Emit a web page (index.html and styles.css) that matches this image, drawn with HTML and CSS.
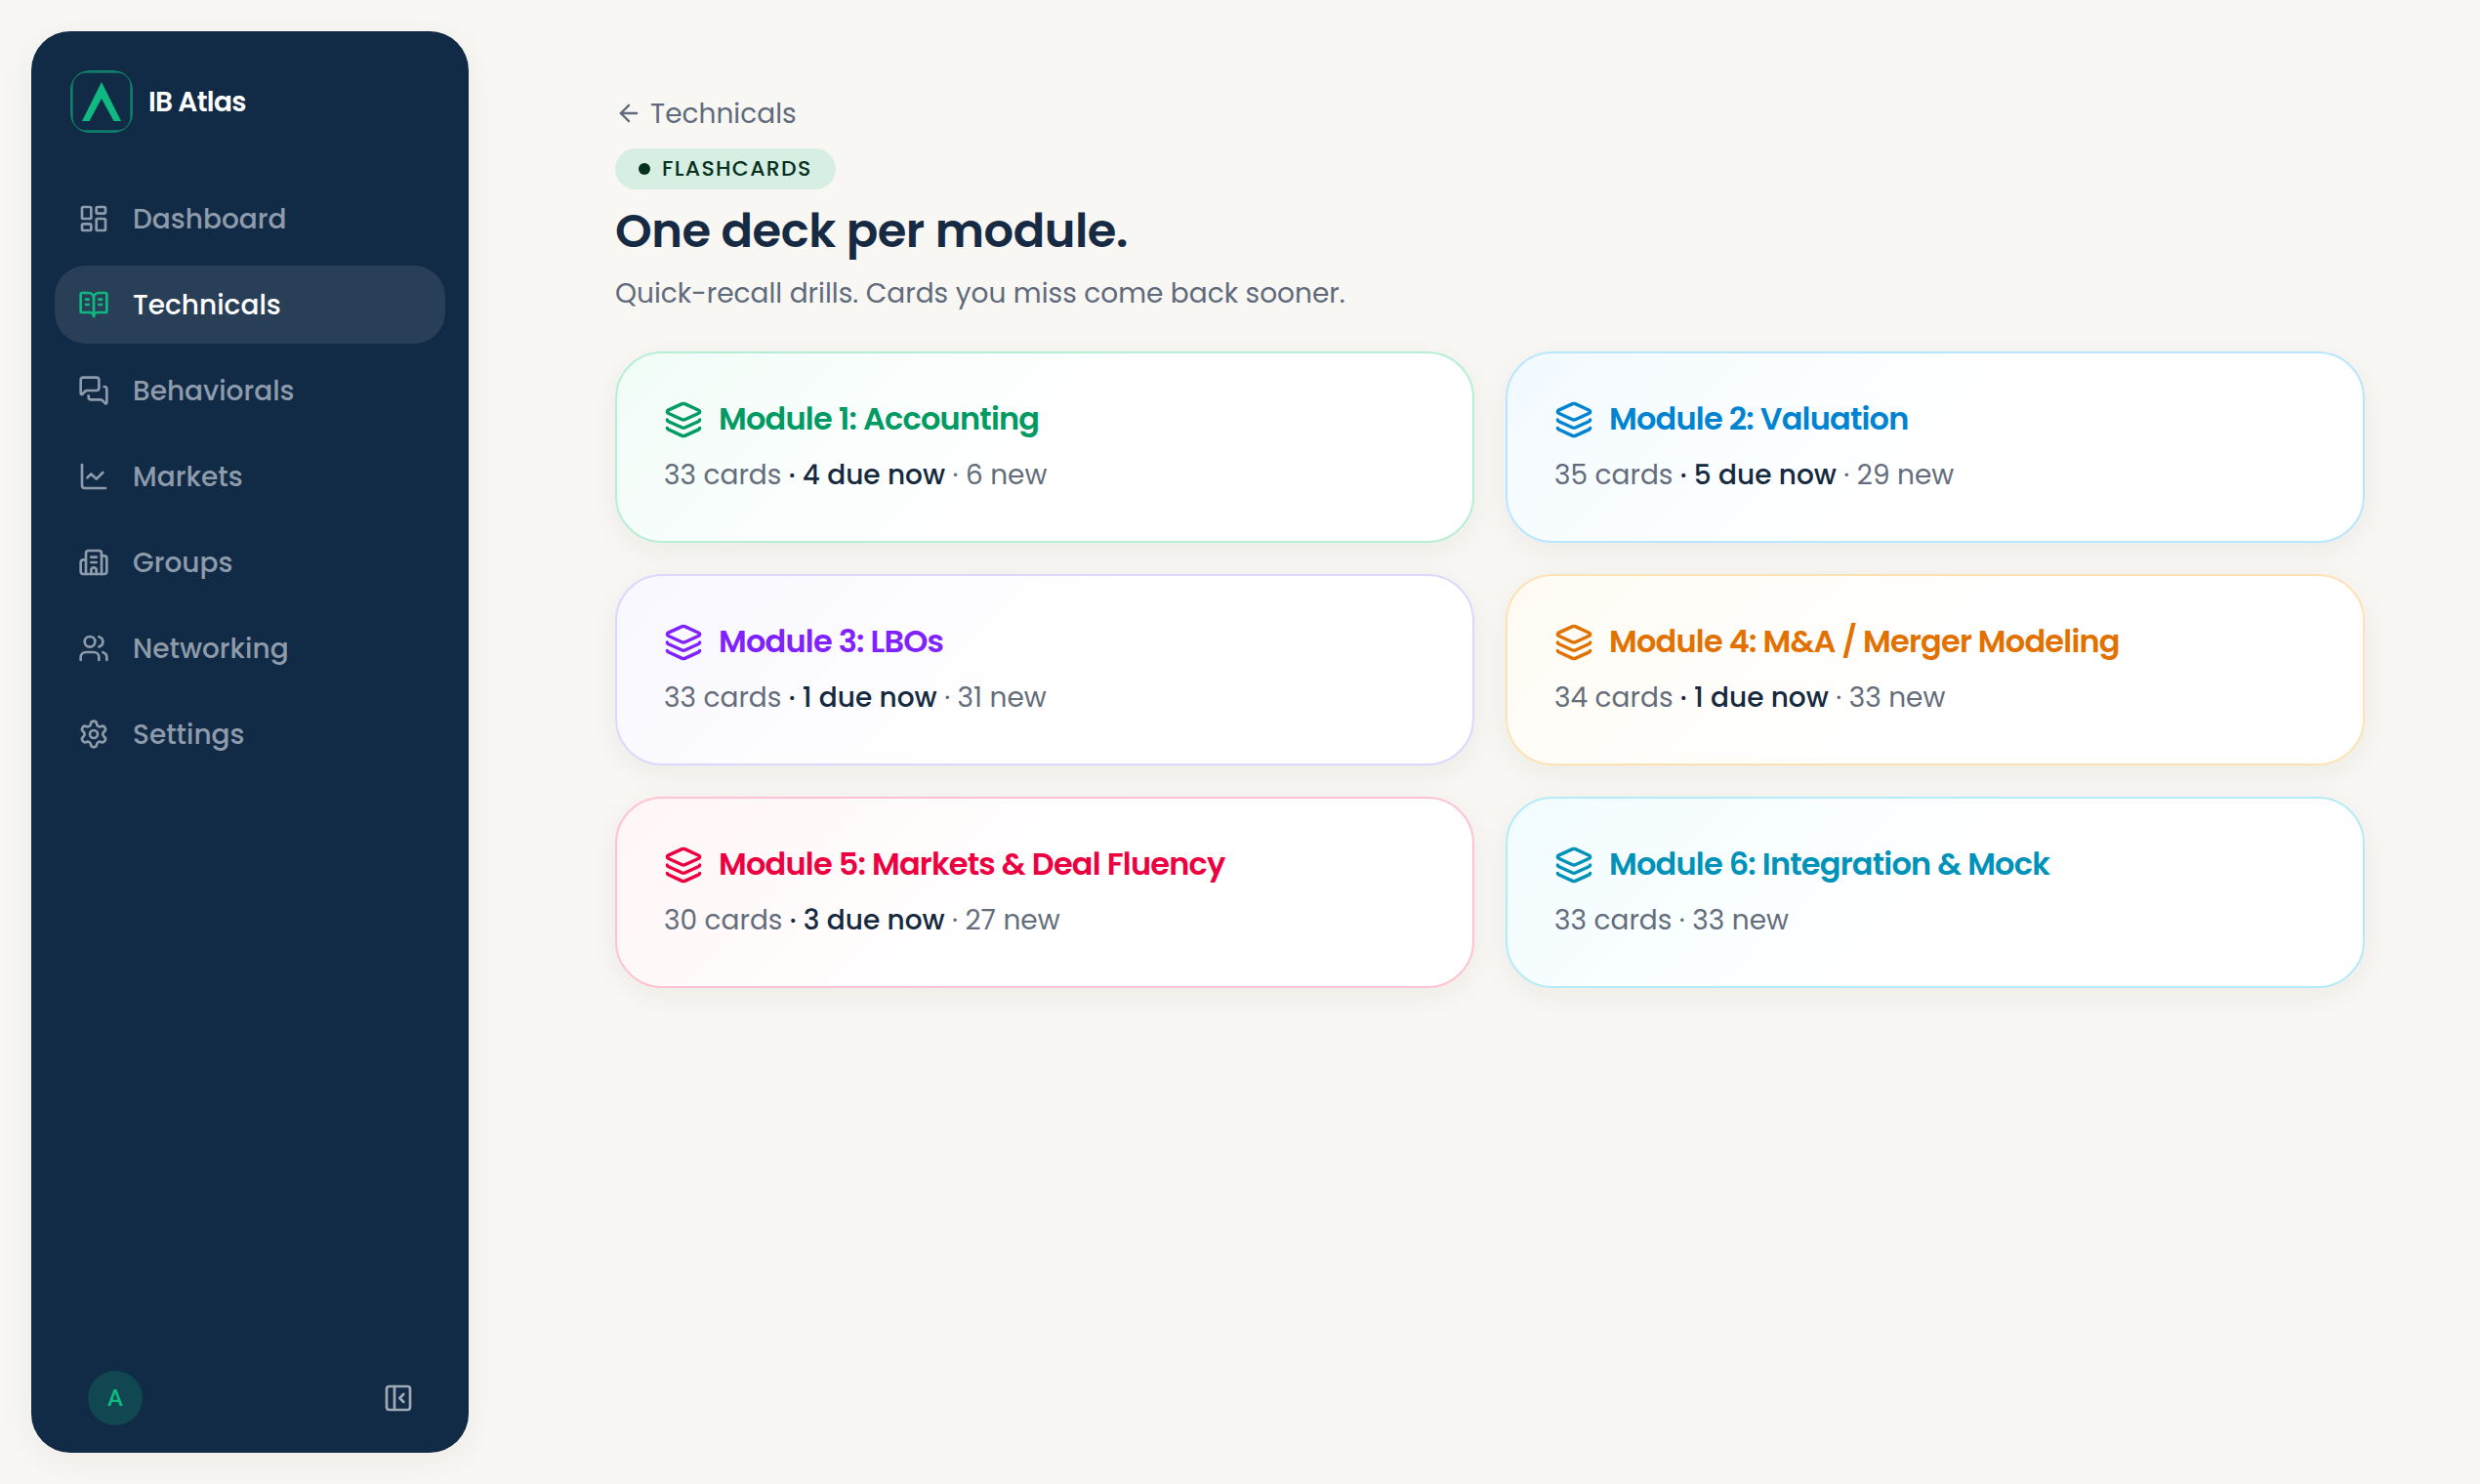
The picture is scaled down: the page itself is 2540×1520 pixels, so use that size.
FILE: index.html
```
<!DOCTYPE html>
<html lang="en">

<head>
  <meta charset="UTF-8">
  <title>IB Atlas - Flashcards</title>
  <link rel="stylesheet" href="styles.css">
</head>

<body>
  <!-- Shared icon for the deck cards -->
  <svg class="sprite" width="0" height="0">
    <symbol id="layers" viewBox="0 0 24 24">
      <path d="M12.83 2.18a2 2 0 0 0-1.66 0L2.6 6.08a1 1 0 0 0 0 1.83l8.58 3.91a2 2 0 0 0 1.66 0l8.58-3.9a1 1 0 0 0 0-1.83z"/>
      <path d="M2 12a1 1 0 0 0 .58.91l8.6 3.91a2 2 0 0 0 1.65 0l8.58-3.9A1 1 0 0 0 22 12"/>
      <path d="M2 17a1 1 0 0 0 .58.91l8.6 3.91a2 2 0 0 0 1.65 0l8.58-3.9A1 1 0 0 0 22 17"/>
    </symbol>
  </svg>

  <aside class="sidebar">
    <div class="brand">
      <svg class="logo" viewBox="0 0 64 64">
        <path class="logo-frame" fill-rule="evenodd" d="M20 0H44A20 20 0 0 1 64 20V44A20 20 0 0 1 44 64H20A20 20 0 0 1 0 44V20A20 20 0 0 1 20 0ZM15.700 2.700A13 13 0 0 0 2.700 15.700V48.300A13 13 0 0 0 15.700 61.300H48.300A13 13 0 0 0 61.300 48.300V15.700A13 13 0 0 0 48.300 2.700Z"/>
        <path class="logo-mark" d="M32 12L52 52H44.500L32 29L19.500 52H12Z"/>
      </svg>
      <span class="brand-name">IB Atlas</span>
    </div>

    <nav class="nav">
      <a class="nav-item" href="#">
        <svg class="icon" viewBox="0 0 24 24"><rect width="7" height="9" x="3" y="3" rx="1"/><rect width="7" height="5" x="14" y="3" rx="1"/><rect width="7" height="9" x="14" y="12" rx="1"/><rect width="7" height="5" x="3" y="16" rx="1"/></svg>
        <span>Dashboard</span>
      </a>
      <a class="nav-item active" href="#">
        <svg class="icon" viewBox="0 0 24 24"><path d="M12 7v14"/><path d="M16 12h2"/><path d="M16 8h2"/><path d="M3 18a1 1 0 0 1-1-1V4a1 1 0 0 1 1-1h5a4 4 0 0 1 4 4 4 4 0 0 1 4-4h5a1 1 0 0 1 1 1v13a1 1 0 0 1-1 1h-6a3 3 0 0 0-3 3 3 3 0 0 0-3-3z"/><path d="M6 12h2"/><path d="M6 8h2"/></svg>
        <span>Technicals</span>
      </a>
      <a class="nav-item" href="#">
        <svg class="icon" viewBox="0 0 24 24"><path d="M16 10a2 2 0 0 1-2 2H6.828a2 2 0 0 0-1.414.586l-2.202 2.202A.71.71 0 0 1 2 14.286V4a2 2 0 0 1 2-2h10a2 2 0 0 1 2 2z"/><path d="M20 9a2 2 0 0 1 2 2v10.286a.71.71 0 0 1-1.212.502l-2.202-2.202A2 2 0 0 0 17.172 19H10a2 2 0 0 1-2-2v-1"/></svg>
        <span>Behaviorals</span>
      </a>
      <a class="nav-item" href="#">
        <svg class="icon" viewBox="0 0 24 24"><path d="M3 3v16a2 2 0 0 0 2 2h16"/><path d="m19 9-5 5-4-4-3 3"/></svg>
        <span>Markets</span>
      </a>
      <a class="nav-item" href="#">
        <svg class="icon" viewBox="0 0 24 24"><path d="M10 12h4"/><path d="M10 8h4"/><path d="M14 21v-3a2 2 0 0 0-4 0v3"/><path d="M6 10H4a2 2 0 0 0-2 2v7a2 2 0 0 0 2 2h16a2 2 0 0 0 2-2V9a2 2 0 0 0-2-2h-2"/><path d="M6 21V5a2 2 0 0 1 2-2h8a2 2 0 0 1 2 2v16"/></svg>
        <span>Groups</span>
      </a>
      <a class="nav-item" href="#">
        <svg class="icon" viewBox="0 0 24 24"><path d="M16 21v-2a4 4 0 0 0-4-4H6a4 4 0 0 0-4 4v2"/><path d="M16 3.128a4 4 0 0 1 0 7.744"/><path d="M22 21v-2a4 4 0 0 0-3-3.870"/><circle cx="9" cy="7" r="4"/></svg>
        <span>Networking</span>
      </a>
      <a class="nav-item" href="#">
        <svg class="icon" viewBox="0 0 24 24"><path d="M9.671 4.136a2.340 2.340 0 0 1 4.659 0 2.340 2.340 0 0 0 3.319 1.915 2.340 2.340 0 0 1 2.330 4.033 2.340 2.340 0 0 0 0 3.831 2.340 2.340 0 0 1-2.330 4.033 2.340 2.340 0 0 0-3.319 1.915 2.340 2.340 0 0 1-4.659 0 2.340 2.340 0 0 0-3.320-1.915 2.340 2.340 0 0 1-2.330-4.033 2.340 2.340 0 0 0 0-3.831A2.340 2.340 0 0 1 6.350 6.051a2.340 2.340 0 0 0 3.319-1.915"/><circle cx="12" cy="12" r="3"/></svg>
        <span>Settings</span>
      </a>
    </nav>

    <div class="sidebar-footer">
      <span class="avatar">A</span>
      <svg class="icon collapse" viewBox="0 0 24 24"><rect width="18" height="18" x="3" y="3" rx="2"/><path d="M9 3v18"/><path d="m16 15-3-3 3-3"/></svg>
    </div>
  </aside>

  <main class="main">
    <div class="content">
      <a class="back" href="#">
        <svg class="back-icon" viewBox="0 0 24 24"><path d="m12 19-7-7 7-7"/><path d="M19 12H5"/></svg>
        <span>Technicals</span>
      </a>
      <div class="badge"><span class="dot"></span>FLASHCARDS</div>
      <h1>One deck per module.</h1>
      <p class="subtitle">Quick-recall drills. Cards you miss come back sooner.</p>

      <div class="decks">
        <a class="deck green" href="#">
          <div class="deck-head"><svg class="deck-icon"><use href="#layers"/></svg><h2>Module 1: Accounting</h2></div>
          <p class="meta">33 cards<strong> · 4 due now</strong> · 6 new</p>
        </a>
        <a class="deck blue" href="#">
          <div class="deck-head"><svg class="deck-icon"><use href="#layers"/></svg><h2>Module 2: Valuation</h2></div>
          <p class="meta">35 cards<strong> · 5 due now</strong> · 29 new</p>
        </a>
        <a class="deck violet" href="#">
          <div class="deck-head"><svg class="deck-icon"><use href="#layers"/></svg><h2>Module 3: LBOs</h2></div>
          <p class="meta">33 cards<strong> · 1 due now</strong> · 31 new</p>
        </a>
        <a class="deck orange" href="#">
          <div class="deck-head"><svg class="deck-icon"><use href="#layers"/></svg><h2>Module 4: M&amp;A / Merger Modeling</h2></div>
          <p class="meta">34 cards<strong> · 1 due now</strong> · 33 new</p>
        </a>
        <a class="deck rose" href="#">
          <div class="deck-head"><svg class="deck-icon"><use href="#layers"/></svg><h2>Module 5: Markets &amp; Deal Fluency</h2></div>
          <p class="meta">30 cards<strong> · 3 due now</strong> · 27 new</p>
        </a>
        <a class="deck cyan" href="#">
          <div class="deck-head"><svg class="deck-icon"><use href="#layers"/></svg><h2>Module 6: Integration &amp; Mock</h2></div>
          <p class="meta">33 cards · 33 new</p>
        </a>
      </div>
    </div>
  </main>
</body>

</html>
```
FILE: styles.css
```
* {
  box-sizing: border-box;
}

body {
  margin: 0;
  padding: 32px;
  height: 1520px;
  display: flex;
  gap: 32px;
  background: #f8f7f3;
  color: #15293f;
  font-family: Poppins, Inter, sans-serif;
  font-size: 28px;
}

a {
  color: inherit;
  text-decoration: none;
}

h1, h2, p {
  margin: 0;
}

.sprite {
  display: none;
}

/* Sidebar */
.sidebar {
  display: flex;
  flex-direction: column;
  flex: none;
  width: 448px;
  padding: 40px 24px 28px;
  border-radius: 40px;
  background: #112a45;
  box-shadow: 0 8px 40px rgba(60, 40, 20, 0.06);
}

.brand {
  display: flex;
  align-items: center;
  gap: 16px;
  padding-left: 16px;
}

.logo {
  width: 64px;
  height: 64px;
}

.logo-frame {
  fill: #107e6b;
}

.logo-mark {
  fill: #10b981;
}

.brand-name {
  padding-top: 2px;
  color: #fff;
  font-weight: 600;
  letter-spacing: -0.025em;
}

.nav {
  display: flex;
  flex-direction: column;
  gap: 8px;
  margin-top: 48px;
}

.nav-item {
  display: flex;
  align-items: center;
  gap: 24px;
  height: 80px;
  padding: 0 24px;
  border-radius: 32px;
  color: #8e9bab;
  font-weight: 500;
}

.nav-item span {
  padding-top: 2px;
}

.nav-item.active {
  background: #293f57;
  color: #fff;
}

.nav-item.active .icon {
  stroke: #10b981;
}

.icon {
  flex: none;
  width: 32px;
  height: 32px;
  fill: none;
  stroke: currentColor;
  stroke-width: 2;
  stroke-linecap: round;
  stroke-linejoin: round;
}

.sidebar-footer {
  display: flex;
  align-items: center;
  justify-content: space-between;
  margin-top: auto;
  padding: 0 32px 0 34px;
}

.avatar {
  display: flex;
  align-items: center;
  justify-content: center;
  width: 56px;
  height: 56px;
  border-radius: 50%;
  background: #114751;
  color: #10b981;
  font-family: Roboto, sans-serif;
  font-size: 24px;
  font-weight: 500;
}

.collapse {
  color: #a0aab5;
}

/* Main column */
.main {
  flex: 1;
  padding-top: 64px;
  margin-right: -32px;
}

.content {
  max-width: 1792px;
  margin: 0 auto;
}

.back {
  display: flex;
  align-items: center;
  gap: 8px;
  height: 40px;
  color: #5f6b7c;
}

.back span {
  padding-top: 2px;
}

.back-icon {
  width: 28px;
  height: 28px;
  fill: none;
  stroke: currentColor;
  stroke-width: 2;
  stroke-linecap: round;
  stroke-linejoin: round;
}

.badge {
  display: flex;
  align-items: center;
  gap: 12px;
  width: 226px;
  height: 42px;
  margin-top: 16px;
  padding-left: 24px;
  border-radius: 21px;
  background: #d7efe2;
  color: #06301f;
  font-size: 22px;
  font-weight: 500;
  line-height: 40px;
  letter-spacing: 0.06em;
}

.dot {
  width: 12px;
  height: 12px;
  border-radius: 50%;
  background: #06301f;
}

h1 {
  margin-top: 13px;
  color: #172a43;
  font-size: 48px;
  font-weight: 600;
  line-height: 60px;
  letter-spacing: -0.01em;
}

.subtitle {
  margin-top: 12px;
  color: #5f6b7c;
  line-height: 44px;
}

/* Deck cards */
.decks {
  display: grid;
  grid-template-columns: 1fr 1fr;
  gap: 32px;
  margin-top: 37px;
}

.deck {
  height: 196px;
  padding: 48px;
  border: 2px solid;
  border-radius: 48px;
  box-shadow: 0 8px 32px rgba(40, 35, 20, 0.06);
}

.deck-head {
  display: flex;
  gap: 16px;
  height: 40px;
}

.deck-icon {
  width: 40px;
  height: 40px;
  fill: none;
  stroke: currentColor;
  stroke-width: 2;
  stroke-linecap: round;
  stroke-linejoin: round;
}

h2 {
  font-size: 32px;
  font-weight: 600;
  line-height: 38px;
  letter-spacing: -0.025em;
}

.meta {
  margin-top: 17px;
  color: #646d7b;
  line-height: 40px;
}

.meta strong {
  color: #15293f;
  font-weight: 500;
}

.green {
  border-color: #b7eed6;
  background: linear-gradient(135deg, #f1fcf7 0%, #fff 50%);
  color: #009a63;
}

.blue {
  border-color: #b8e6fe;
  background: linear-gradient(135deg, #f2faff 0%, #fff 50%);
  color: #0084d1;
}

.violet {
  border-color: #ddd6ff;
  background: linear-gradient(135deg, #f8f7ff 0%, #fff 50%);
  color: #7f22fe;
}

.orange {
  border-color: #fee2b3;
  background: linear-gradient(135deg, #fffbf3 0%, #fff 50%);
  color: #e17100;
}

.rose {
  border-color: #ffc2d3;
  background: linear-gradient(135deg, #fff5f6 0%, #fff 50%);
  color: #ec003f;
}

.cyan {
  border-color: #b5ebf7;
  background: linear-gradient(135deg, #f1fcff 0%, #fff 50%);
  color: #0092b8;
}
```
